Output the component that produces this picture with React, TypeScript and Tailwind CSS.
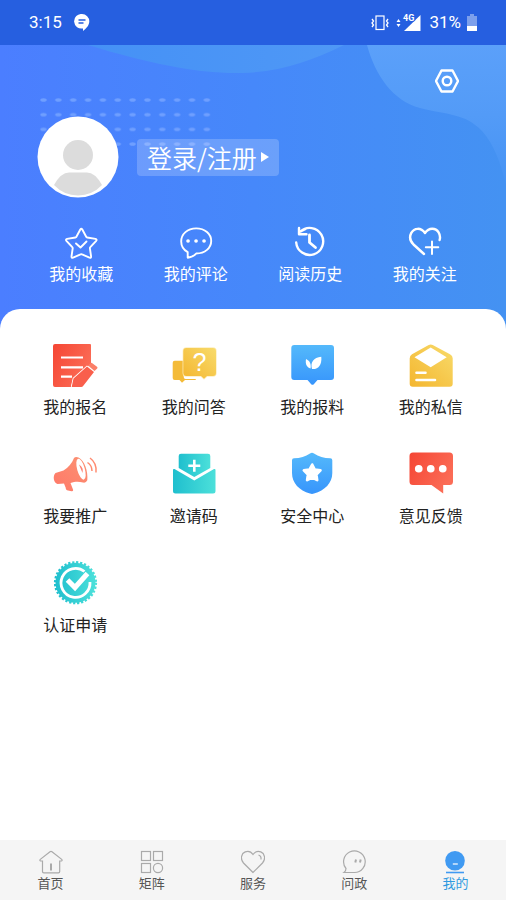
import React from 'react';

interface MenuItem {
  label: string;
  icon: React.ReactNode;
}

const shortcuts: MenuItem[] = [
  {
    label: '我的收藏',
    icon: (
      <>
        <path d="M17.300 4.500q1-1.600 2 0l3.900 7.300q.3.600 1 .7l8.300 1.400q1.700.5.700 1.900l-5.900 6.400q-.5.500-.4 1.200l1.200 8.100q0 1.700-1.600 1.200l-7.400-3.300q-.8-.4-1.600 0l-7.400 3.300q-1.600.5-1.600-1.200l1.200-8.100q.1-.7-.4-1.200l-5.900-6.400q-1-1.400.7-1.900l8.300-1.400q.7-.1 1-.7z" />
        <path d="M13 18.500l4.500 4 6-6" />
      </>
    ),
  },
  {
    label: '我的评论',
    icon: (
      <>
        <path d="M9.700 27.200C5.800 25 3.200 21.200 3.200 16.500 3.200 9 9.500 3.400 18.200 3.400S33.200 9 33.200 16s-6.200 12.500-15 12.500c-1.500 1.800-4.500 3.600-8.500 4.200z" />
        <path d="M10 16h.1M18 16h.1M26 16h.1" strokeWidth="3.600" />
      </>
    ),
  },
  {
    label: '阅读历史',
    icon: (
      <>
        <path d="M4.200 17.500A13.500 13.500 0 1 0 8.500 6.500L13.500 4" strokeWidth="2.400" />
        <path d="M7 3v6.200h7.500" strokeWidth="2.400" />
        <path d="M17.500 10v7.500l6 5" strokeWidth="2.800" />
      </>
    ),
  },
  {
    label: '我的关注',
    icon: (
      <>
        <path
          d="M17 29L6.500 19.500C3 16 2.400 11.500 4.300 7.900 7.200 2.600 14 2.300 18 8c4-5.700 10.700-5.300 13.600-.6 1.500 2.500 1.800 5 1 7.600"
          strokeWidth="2.400"
        />
        <path d="M25 16.500v12.500M18.800 22.300h12.500" strokeWidth="2" />
      </>
    ),
  },
];

const services: MenuItem[] = [
  {
    label: '我的报名',
    icon: (
      <>
        <path d="M4 2h35a1 1 0 0 1 1 1v19L22 37l-2 8H4a2 2 0 0 1-2-2V4a2 2 0 0 1 2-2z" fill="url(#red)" />
        <path d="M10 15.500h22M10 25.300h22M10 34.700h11" stroke="#fff" strokeWidth="2.200" />
        <path
          d="M20.700 45l1.800-8.500L36 24.500l7 5.500L32.500 43.500q-1 1.500-2.500 1.500z"
          fill="#f95f4c"
          stroke="#fff"
          strokeWidth="1.600"
          paintOrder="stroke"
        />
        <path
          d="M37 23.500l2.500-2.300q.9-.7 1.800 0l4.700 3.500q1 .8.200 1.700L43.500 29z"
          fill="#fb7f68"
        />
      </>
    ),
  },
  {
    label: '我的问答',
    icon: (
      <>
        <path
          d="M4.700 18.700h9V35q0 2 2 2h10v1H15l-3 2.700L9.500 38H4.700a2 2 0 0 1-2-2V20.700a2 2 0 0 1 2-2z"
          fill="#f4bb38"
        />
        <path
          d="M16.300 6H43a3 3 0 0 1 3 3v22a3 3 0 0 1-3 3h-6l-3 2.700L31 34H16.300a3 3 0 0 1-3-3V9a3 3 0 0 1 3-3z"
          fill="url(#yellow)"
          stroke="#fdeec0"
          strokeWidth="1.400"
          paintOrder="stroke"
        />
        <text x="29.500" y="29" textAnchor="middle" fill="#fff" fontSize="25" fontFamily="Liberation Sans, sans-serif">
          ?
        </text>
      </>
    ),
  },
  {
    label: '我的报料',
    icon: (
      <>
        <path
          d="M6.300 3H43a3 3 0 0 1 3 3v29a3 3 0 0 1-3 3H29.500l-3.700 4.200q-1.300 1.200-2.600 0L19.500 38H6.300a3 3 0 0 1-3-3V6a3 3 0 0 1 3-3z"
          fill="url(#blue)"
        />
        <path d="M24 27c-2-6.500 1.500-11.500 9.300-12.300C34 23 30.500 27.500 24 27z" fill="#fff" />
        <path d="M22.600 26.500c-4-1-5.400-4.500-4.600-9.500 3.500 1.500 5.300 4.500 4.600 9.500z" fill="#fff" />
      </>
    ),
  },
  {
    label: '我的私信',
    icon: (
      <>
        <path
          d="M5 12.300L21.700 3q2-1.200 4 0l17.300 9.300q2.700 1.500 2.700 4V41.700a3 3 0 0 1-3 3h-37a3 3 0 0 1-3-3V16.300q0-2.500 2.300-4z"
          fill="url(#yellow)"
        />
        <path d="M23.700 5.500l16 9.800-16 10-16.200-10z" fill="#fff" />
        <path d="M9.500 30.700h9M9.500 38H28" stroke="#fff" strokeWidth="2.600" strokeLinecap="round" />
      </>
    ),
  },
  {
    label: '我要推广',
    icon: (
      <>
        <path
          d="M4.500 22l8-2.500C17.500 16.500 21 12 23 7q1.500-1.500 4.500-.500c6 3 9.700 13.500 8.800 22.700q-1.300 3-4.300 2.300c-4.500-1-8-1-12.500.5l2.700 7q-.2 1.500-1.700 1.200l-4.500-1q-1.500-1-1.300-2.500L13 32.500l-6.500.5C2.500 32 1.500 25 4.500 22z"
          fill="url(#salmon)"
        />
        <ellipse cx="30" cy="18.200" rx="3.800" ry="10.800" transform="rotate(-16 30 18.200)" fill="#fff" />
        <path d="M28 13.500q5 3 3.500 8.500" fill="#ff8272" />
        <path d="M36.500 11.500q4.500 3 4.500 8.500M39 7q7 5 6 14.500" fill="none" stroke="#ff8b70" strokeWidth="1.500" />
      </>
    ),
  },
  {
    label: '邀请码',
    icon: (
      <>
        <path d="M11 2.700h27a2.300 2.300 0 0 1 2.300 2.300V17L24.300 26 8.700 17V5A2.300 2.300 0 0 1 11 2.700z" fill="url(#teal)" />
        <path
          d="M4.500 18L24.300 29.500 44 18q1.500-.5 1.500 1v21a2.500 2.500 0 0 1-2.500 2.500H5.500A2.500 2.500 0 0 1 3 40V19q0-1.500 1.500-1z"
          fill="url(#teal)"
        />
        <path d="M24.300 8.700v12M18.300 14.700h12" stroke="#fff" strokeWidth="2.600" />
      </>
    ),
  },
  {
    label: '安全中心',
    icon: (
      <>
        <path
          d="M22 2.500q2-1.400 4 0c4.500 3.300 10 4.600 16.300 4.700q2 0 2 2V22c0 10-7.500 17.500-18.300 20.600q-2 .600-4 0C11.200 39.500 4 32 4 22V9.200q0-2 2-2C12.200 7.100 17.500 5.800 22 2.500z"
          fill="url(#blue)"
        />
        <path
          d="M24.200 13.500l2.600 5 5.700.9-4.100 4.100.8 5.700-5-2.600-5.100 2.600.8-5.700-4.100-4.100 5.700-.9z"
          fill="#fff"
          stroke="#fff"
          strokeWidth="2.600"
          strokeLinejoin="round"
        />
      </>
    ),
  },
  {
    label: '意见反馈',
    icon: (
      <>
        <path
          d="M6 1.500h36.500A3.500 3.500 0 0 1 46 5v25.500a3.500 3.500 0 0 1-3.500 3.500h-6.300v8.500L24.500 34H6a3.500 3.500 0 0 1-3.500-3.500V5A3.500 3.500 0 0 1 6 1.500z"
          fill="url(#red)"
        />
        <path d="M11.700 17.700h.1M23.700 17.700h.1M35.700 17.700h.1" stroke="#fff" strokeWidth="7.600" strokeLinecap="round" />
      </>
    ),
  },
  {
    label: '认证申请',
    icon: (
      <>
        <circle cx="24.500" cy="22.700" r="20" fill="url(#teal)" />
        <circle
          cx="24.500"
          cy="22.700"
          r="20.200"
          fill="none"
          stroke="url(#teal)"
          strokeWidth="2.800"
          strokeDasharray="2.200 1.767"
        />
        <path d="M33.500 11.500A14.500 14.500 0 1 0 39 22" fill="none" stroke="#fff" strokeWidth="2.800" />
        <path d="M16.500 20l7.500 7.500 12.500-14" fill="none" stroke="#fff" strokeWidth="5" />
      </>
    ),
  },
];

const tabs: MenuItem[] = [
  {
    label: '首页',
    icon: (
      <>
        <path d="M3.500 11H1.500q-1.200-.6-.2-1.600L11 1.800q1-.7 2 0l9.700 7.600q1 1-.2 1.600h-1.800v10.500q0 1.300-1.300 1.300H4.800q-1.300 0-1.300-1.300z" />
        <path d="M12 13.500v7" strokeWidth="2" />
      </>
    ),
  },
  {
    label: '矩阵',
    icon: (
      <>
        <rect x="1.500" y="1.500" width="9" height="9" />
        <rect x="13.500" y="1.500" width="9" height="9" />
        <rect x="1.500" y="13.500" width="9" height="9" />
        <circle cx="18" cy="18" r="4.600" />
      </>
    ),
  },
  {
    label: '服务',
    icon: (
      <>
        <path d="M12 22.500L2.500 13C-1 9 .2 3.500 4.200 1.900 7.300.700 10.300 2 12 4.500 13.700 2 16.700.700 19.800 1.900c4 1.600 5.200 7.100 1.700 11.100z" />
        <path d="M17.500 5q3 1 2.500 4.500" />
      </>
    ),
  },
  {
    label: '问政',
    icon: (
      <>
        <path d="M4 18.500A10.800 10.800 0 1 1 12.500 22.500H2q2-1.500 2-4z" />
        <path d="M14 9.500l-.7 3M18.700 9.500l-.7 3" strokeWidth="2" />
      </>
    ),
  },
  {
    label: '我的',
    icon: (
      <>
        <circle cx="12" cy="10.800" r="9.800" fill="#409af2" stroke="none" />
        <path d="M9.800 14h5" stroke="#fff" />
        <path d="M3 22.500h18" stroke="#409af2" strokeWidth="1.600" />
      </>
    ),
  },
];

// shared gradients for the service icons
const Gradients: React.FC = () => (
  <svg className="absolute size-0" aria-hidden="true">
    <defs>
      <linearGradient id="red" x1="0" y1="0" x2="1" y2="0.5">
        <stop offset="0" stopColor="#f54634" />
        <stop offset="1" stopColor="#fb6c56" />
      </linearGradient>
      <linearGradient id="salmon" x1="0" y1="1" x2="1" y2="0">
        <stop offset="0" stopColor="#ff7868" />
        <stop offset="1" stopColor="#fb9273" />
      </linearGradient>
      <linearGradient id="yellow" x1="0" y1="1" x2="1" y2="0">
        <stop offset="0" stopColor="#f4b62f" />
        <stop offset="1" stopColor="#f8db6b" />
      </linearGradient>
      <linearGradient id="blue" x1="0" y1="0" x2="0" y2="1">
        <stop offset="0" stopColor="#54b9fb" />
        <stop offset="1" stopColor="#3795fc" />
      </linearGradient>
      <linearGradient id="teal" x1="0" y1="0" x2="1" y2="0">
        <stop offset="0" stopColor="#1fbfce" />
        <stop offset="1" stopColor="#4ce0da" />
      </linearGradient>
    </defs>
  </svg>
);

const StatusBar: React.FC = () => (
  <div className="flex h-[45px] items-center bg-[#265fe0] px-[29px] font-[Roboto,sans-serif] text-[17px] text-white">
    <span>3:15</span>
    <svg className="ml-3 h-[18px] w-4" viewBox="0 0 16 18">
      <path d="M8 0a7.300 7.300 0 0 1 7.300 7.300c0 4-3 7.200-6.300 9.700v-2.600A7.300 7.300 0 1 1 8 0z" fill="#fff" />
      <path d="M4.500 6h7M4.500 9h5" stroke="#265fe0" strokeWidth="1.300" />
    </svg>
    <svg className="ml-auto h-[18px] w-[50px]" viewBox="0 0 50 18" fill="none" stroke="#fff">
      <rect x="5" y="2" width="8" height="13.500" strokeWidth="1.200" />
      <path d="M1 5l1.500 2L1 9l1.500 2L1 13M17 5l-1.500 2L17 9l-1.500 2 1.500 2" strokeWidth="1.300" />
      <path d="M25.500 8l2-3 2 3zM25.500 10l2 3 2-3z" fill="#fff" stroke="none" />
      <path d="M49.500 1v16H33z" fill="#fff" stroke="none" />
      <text x="32" y="7" fill="#fff" stroke="#265fe0" strokeWidth="2" paintOrder="stroke" fontSize="9" fontWeight="700">
        4G
      </text>
    </svg>
    <span className="ml-2">31%</span>
    <svg className="ml-1.5 h-[18px] w-2.5" viewBox="0 0 10 18">
      <path d="M3 0h4v2h3v15H0V2h3z" fill="#fff" fillOpacity=".4" />
      <path d="M0 12h10v5H0z" fill="#fff" />
    </svg>
  </div>
);

const HeroBackground: React.FC = () => (
  <svg
    className="absolute inset-0 -z-10 size-full"
    viewBox="0 0 506 284"
    preserveAspectRatio="none"
    aria-hidden="true"
  >
    <defs>
      <linearGradient id="curve" x1="0" y1="0" x2="0" y2="1">
        <stop offset="0" stopColor="#5ba0fa" />
        <stop offset="0.5" stopColor="#539bf7" />
        <stop offset="1" stopColor="#4693f4" />
      </linearGradient>
      <linearGradient id="wave" x1="0" y1="0" x2="1" y2="0">
        <stop offset="0" stopColor="#4591f6" />
        <stop offset="1" stopColor="#4f98f6" />
      </linearGradient>
      <pattern id="dots" x="40" y="53" width="14.850" height="14.700" patternUnits="userSpaceOnUse">
        <ellipse cx="3.500" cy="2" rx="3.200" ry="1.700" fill="#6f9fff" />
      </pattern>
    </defs>
    <path d="M88 0C150 19 200 29 242 28C280 27 311 16 344 0z" fill="url(#wave)" />
    <path d="M367 0C375 30 393 56 420 63C447 70 465 68 482 86C494 99 501 119 506 140V0z" fill="url(#curve)" />
    <rect x="40" y="53" width="172" height="50" fill="url(#dots)" />
  </svg>
);

const Profile: React.FC = () => (
  <header className="relative isolate bg-linear-to-r from-[#4b7eff] via-[#4688fa] to-[#4492f2] pt-6 pb-11 text-white">
    <HeroBackground />
    <div className="flex justify-end pr-[47px]">
      <button aria-label="设置">
        <svg className="size-6" viewBox="0 0 24 24" fill="none" stroke="#fff" strokeWidth="2.400" strokeLinejoin="round">
          <path d="M6.500 1.500h11L23 12l-5.500 10.500h-11L1 12z" />
          <circle cx="12" cy="12" r="4.300" />
        </svg>
      </button>
    </div>
    <div className="mt-[23px] flex items-center gap-[18px] pl-[37px]">
      <svg className="size-[82px]" viewBox="0 0 82 82">
        <circle cx="41" cy="41" r="40.500" fill="#fff" />
        <circle cx="41" cy="39" r="15" fill="#dcdcdc" />
        <path d="M17 69q7-12.500 15-12.500h18q8 0 15 12.500Q55 79.500 41 79.500T17 69z" fill="#dcdcdc" />
      </svg>
      <button className="flex h-[37px] items-center gap-1 rounded bg-white/20 px-2.5 text-[25px] leading-none font-[350]">
        登录/注册
        <svg className="h-2.5 w-2" viewBox="0 0 8 10" fill="#fff">
          <path d="M0 0l8 5-8 5z" />
        </svg>
      </button>
    </div>
    <nav className="mt-[27px] grid grid-cols-4 px-6">
      {shortcuts.map((item) => (
        <button key={item.label} className="flex flex-col items-center text-base leading-6">
          <svg
            className="size-9"
            viewBox="0 0 36 36"
            fill="none"
            stroke="#fff"
            strokeWidth="1.900"
            strokeLinecap="round"
            strokeLinejoin="round"
          >
            {item.icon}
          </svg>
          {item.label}
        </button>
      ))}
    </nav>
  </header>
);

const App: React.FC = () => {
  return (
    <div className="flex min-h-screen flex-col bg-white font-['Noto_Sans_CJK_SC',sans-serif]">
      <Gradients />
      <StatusBar />
      <Profile />
      <main className="relative -mt-5 flex-1 rounded-t-[20px] bg-white px-4 pt-[33px] pb-8">
        <div className="grid grid-cols-4 gap-y-[33px]">
          {services.map((item) => (
            <button key={item.label} className="flex flex-col items-center gap-1 text-base leading-6 text-[#222]">
              <svg className="size-12" viewBox="0 0 48 48">
                {item.icon}
              </svg>
              {item.label}
            </button>
          ))}
        </div>
      </main>
      <nav className="grid h-[60px] grid-cols-5 bg-[#f5f5f5] pt-2.5 text-[13px] leading-4 text-[#555]">
        {tabs.map((item) => (
          <a key={item.label} href="#" className="flex flex-col items-center gap-px last:text-[#309ae0]">
            <svg className="size-6" viewBox="0 0 24 24" fill="none" stroke="#aaa" strokeWidth="1.200">
              {item.icon}
            </svg>
            {item.label}
          </a>
        ))}
      </nav>
    </div>
  );
};

export default App;
